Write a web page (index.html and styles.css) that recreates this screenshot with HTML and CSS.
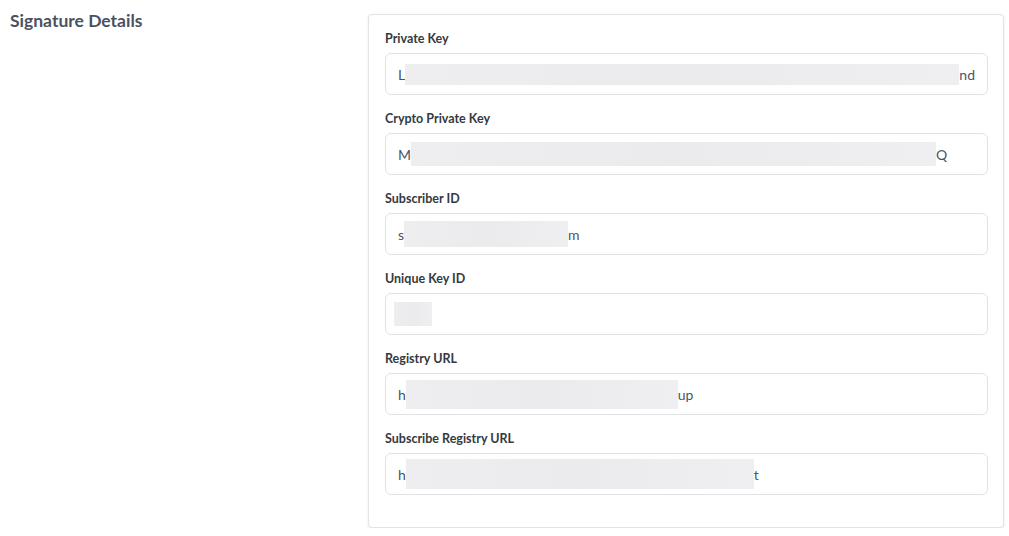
FILE: index.html
```html
<!DOCTYPE html>
<html>
<head>
<meta charset="utf-8">
<link rel="stylesheet" href="styles.css">
</head>
<body>
<div class="page">
  <div class="side">
    <h2 class="title">Signature Details</h2>
  </div>
  <div class="card">
    <div class="field">
      <label class="label">Private Key</label>
      <div class="input"><span>L</span><span class="redact" style="width:558px;height:21px"></span><span>nd</span></div>
    </div>
    <div class="field">
      <label class="label">Crypto Private Key</label>
      <div class="input"><span>M</span><span class="redact" style="width:525px;height:24px"></span><span>Q</span></div>
    </div>
    <div class="field">
      <label class="label">Subscriber ID</label>
      <div class="input"><span>s</span><span class="redact" style="width:164px;height:26px"></span><span>m</span></div>
    </div>
    <div class="field">
      <label class="label">Unique Key ID</label>
      <div class="input input-pad"><span class="redact" style="width:38px;height:24px"></span></div>
    </div>
    <div class="field">
      <label class="label">Registry URL</label>
      <div class="input"><span>h</span><span class="redact" style="width:272px;height:29px"></span><span>up</span></div>
    </div>
    <div class="field">
      <label class="label">Subscribe Registry URL</label>
      <div class="input"><span>h</span><span class="redact" style="width:348px;height:30px"></span><span>t</span></div>
    </div>
  </div>
</div>
</body>
</html>
```

FILE: styles.css
```css
* { box-sizing: border-box; }
html, body { margin: 0; padding: 0; background: #ffffff; }
body {
  font-family: Lato, "Liberation Sans", sans-serif;
  color: #495057;
}
.page {
  display: flex;
  align-items: flex-start;
  padding: 14px 5px 0 10px;
}
.side {
  width: 358px;
  flex: none;
  padding-top: 0;
}
.title {
  margin: -2px 0 0;
  font-size: 17.5px;
  font-weight: 700;
  line-height: 18px;
  color: #4a5260;
}
.card {
  width: 636px;
  flex: none;
  border: 1px solid #e3e3e3;
  border-radius: 4px;
  box-shadow: 0 1px 3px rgba(0, 0, 0, 0.08);
  padding: 16px 15px 32px 16px;
  background: #fff;
}
.field + .field { margin-top: 16px; }
.label {
  display: block;
  font-size: 12.5px;
  font-weight: 700;
  line-height: 16px;
  color: #343a40;
  margin-bottom: 6px;
}
.input {
  display: flex;
  align-items: center;
  height: 42px;
  border: 1px solid #e2e2e2;
  border-radius: 6px;
  padding: 0 12px;
  font-size: 14px;
  color: #4b5566;
}
.input-pad { padding-left: 8px; }
.redact {
  display: block;
  background: linear-gradient(90deg, #eeeef0, #ebebed 50%, #efeff1);
}
```
